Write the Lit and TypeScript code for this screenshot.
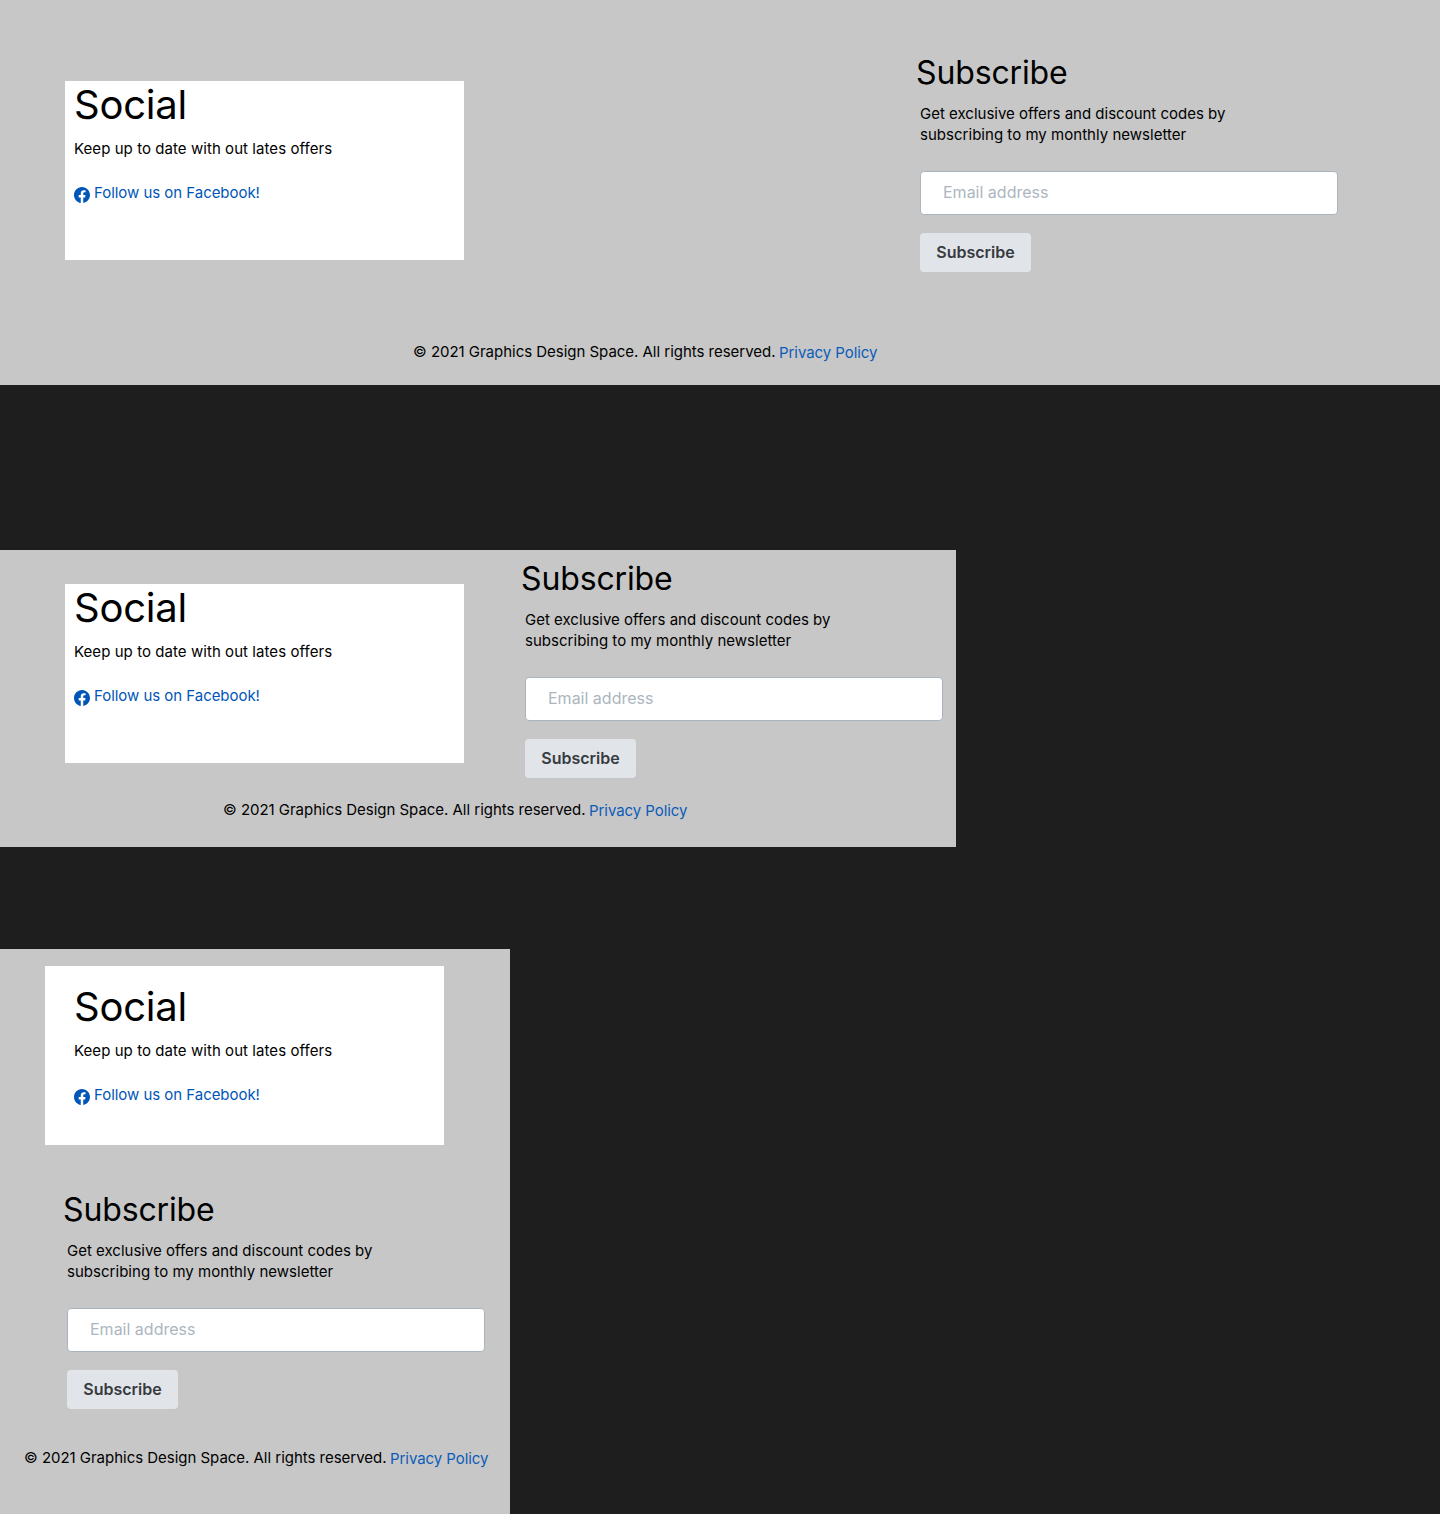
import { LitElement, html, css } from "lit";
import { customElement, property } from "lit/decorators.js";

@customElement("social-card")
class SocialCard extends LitElement {
  static styles = css`
    :host {
      display: block;
      box-sizing: border-box;
      width: 399px;
      height: 179px;
      background: #fff;
      flex: none;
    }
    h2 {
      margin: 0 0 9px;
      font-size: 40px;
      line-height: 48px;
      font-weight: 400;
      letter-spacing: -0.24px;
    }
    p {
      margin: 0 0 23px;
      line-height: 21px;
      letter-spacing: 0.06px;
    }
    .link {
      display: flex;
      gap: 4px;
      line-height: 21px;
      color: #0056b8;
      letter-spacing: -0.04px;
      text-decoration: none;
    }
    svg {
      width: 16px;
      height: 16px;
      margin-top: 5px;
      fill: currentColor;
    }
  `;

  render() {
    return html`
      <h2>Social</h2>
      <p>Keep up to date with out lates offers</p>
      <a class="link">
        <svg viewBox="0 0 16 16" aria-hidden="true">
          <path
            d="M16 8.049c0-4.446-3.582-8.05-8-8.05C3.58 0-.002 3.603-.002 8.05c0 4.017 2.926 7.347 6.75 7.951v-5.625h-2.03V8.05H6.75V6.275c0-2.017 1.195-3.131 3.022-3.131.876 0 1.791.157 1.791.157v1.98h-1.009c-.993 0-1.303.621-1.303 1.258v1.51h2.218l-.354 2.326H9.25V16c3.824-.604 6.75-3.934 6.75-7.951z"
          />
        </svg>
        <span>Follow us on Facebook!</span>
      </a>
    `;
  }
}

@customElement("subscribe-form")
class SubscribeForm extends LitElement {
  static styles = css`
    :host {
      display: block;
      width: 423px;
      flex: none;
    }
    h2 {
      margin: 0;
      padding: 1px 0 10px 1px;
      font-size: 32px;
      line-height: 40px;
      font-weight: 400;
      letter-spacing: -0.13px;
    }
    .body {
      padding-left: 5px;
    }
    p {
      margin: 0 0 26px;
      line-height: 21px;
    }
    .second {
      letter-spacing: 0.025px;
    }
    input {
      display: block;
      box-sizing: border-box;
      width: 418px;
      height: 44px;
      margin: 0 0 18px;
      padding: 0 22px 2px;
      border: 1px solid #a9b4be;
      border-radius: 4px;
      background: #fff;
      font: 16px/24px Inter, sans-serif;
    }
    input::placeholder {
      color: #acb6bf;
      opacity: 1;
    }
    button {
      display: block;
      width: 111px;
      height: 39px;
      padding: 0 0 2px;
      border: 0;
      border-radius: 4px;
      background: #e1e4e9;
      color: #373b3f;
      font: 600 16px/24px Inter, sans-serif;
    }
  `;

  render() {
    return html`
      <h2>Subscribe</h2>
      <div class="body">
        <p>
          Get exclusive offers and discount codes by<br /><span class="second"
            >subscribing to my monthly newsletter</span
          >
        </p>
        <input type="email" placeholder="Email address" />
        <button type="button">Subscribe</button>
      </div>
    `;
  }
}

@customElement("site-footer")
class SiteFooter extends LitElement {
  @property({ reflect: true }) size = "desktop";

  static styles = css`
    :host {
      display: flex;
      flex-direction: column;
      box-sizing: border-box;
      background: #c7c7c7;
    }
    .columns {
      display: flex;
      align-items: flex-start;
    }
    social-card {
      padding-left: 9px;
    }
    .legal {
      display: flex;
      gap: 4px;
      line-height: 21px;
      white-space: nowrap;
    }
    .copy {
      width: 362px;
      letter-spacing: -0.025px;
    }
    .privacy {
      padding-top: 1px;
      color: #0b5cb9;
      letter-spacing: -0.06px;
    }

    :host([size="desktop"]) {
      width: 1440px;
      height: 385px;
      padding-top: 52px;
    }
    :host([size="desktop"]) .columns {
      height: 289px;
      padding-left: 65px;
      gap: 451px;
    }
    :host([size="desktop"]) social-card {
      margin-top: 29px;
    }
    :host([size="desktop"]) .legal {
      padding-left: 413px;
    }

    :host([size="tablet"]) {
      width: 956px;
      height: 297px;
      padding-top: 8px;
    }
    :host([size="tablet"]) .columns {
      height: 241px;
      padding-left: 65px;
      gap: 56px;
    }
    :host([size="tablet"]) social-card {
      margin-top: 26px;
    }
    :host([size="tablet"]) .legal {
      padding-left: 223px;
    }

    :host([size="mobile"]) {
      width: 510px;
      height: 565px;
      padding-top: 17px;
    }
    :host([size="mobile"]) .columns {
      flex-direction: column;
      gap: 44px;
      height: 481px;
    }
    :host([size="mobile"]) social-card {
      margin-left: 45px;
      padding: 17px 0 0 29px;
    }
    :host([size="mobile"]) subscribe-form {
      margin-left: 62px;
    }
    :host([size="mobile"]) .legal {
      padding-left: 24px;
    }
  `;

  render() {
    return html`
      <div class="columns">
        <social-card></social-card>
        <subscribe-form></subscribe-form>
      </div>
      <div class="legal">
        <span class="copy">© 2021 Graphics Design Space. All rights reserved.</span>
        <a class="privacy">Privacy Policy</a>
      </div>
    `;
  }
}

@customElement("app-root")
class AppRoot extends LitElement {
  static styles = css`
    :host {
      display: flex;
      flex-direction: column;
      align-items: flex-start;
      height: 1514px;
      overflow: hidden;
      background: #1e1e1e;
      color: #000;
      font: 15px/21px Inter, sans-serif;
    }
    .tablet {
      margin: 165px 0 102px;
    }
  `;

  render() {
    return html`
      <site-footer size="desktop"></site-footer>
      <site-footer class="tablet" size="tablet"></site-footer>
      <site-footer size="mobile"></site-footer>
    `;
  }
}
